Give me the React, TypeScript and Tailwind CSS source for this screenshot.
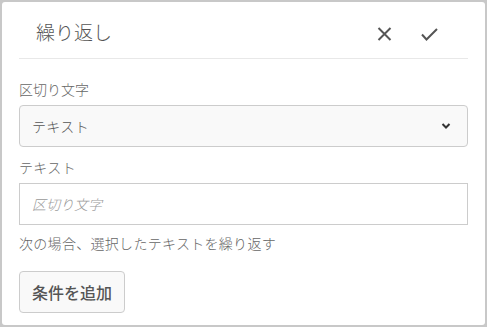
import React from "react";

const font = { fontFamily: '"Noto Sans CJK JP", "Open Sans", sans-serif' };

const App = () => {
  return (
    <div className="w-[487px] h-[327px] bg-[#c8c8c8] p-[2px]" style={font}>
      <div className="h-full bg-white rounded-[3px] px-[17px]">
        <div className="flex items-center h-[57px] border-b border-[#e8e8e8]">
          <h1 className="ml-[17px] text-[19px] font-light text-[#555] leading-[24px] mt-[3px]">
            繰り返し
          </h1>
          <div className="ml-auto flex items-center gap-[29px] mr-[30px] mt-[8px] text-[#555]">
            <svg width="15" height="14" viewBox="0 0 15 14" fill="none" stroke="currentColor" strokeWidth="2">
              <path d="M1.5 1 L13.5 13 M13.5 1 L1.5 13" />
            </svg>
            <svg width="17" height="13" viewBox="0 0 17 13" fill="none" stroke="currentColor" strokeWidth="2">
              <path d="M1 6.5 L5.5 11.5 L16 1" />
            </svg>
          </div>
        </div>

        <div className="pt-[20px]">
          <div className="text-[14px] font-light text-[#666] leading-[20px]">区切り文字</div>
          <div className="mt-[6px] h-[42px] flex items-center px-[12px] bg-[#f9f9f9] border border-[#ccc] rounded-[4px]">
            <span className="text-[14px] font-light text-[#555] tracking-wide">テキスト</span>
            <svg className="ml-auto mr-[4px]" width="10" height="6" viewBox="0 0 10 6" fill="none" stroke="#333" strokeWidth="2">
              <path d="M1.5 1 L5 4.5 L8.5 1" />
            </svg>
          </div>

          <div className="mt-[10px] text-[14px] font-light text-[#666] leading-[20px] tracking-wide">テキスト</div>
          <div className="mt-[6px] h-[42px] flex items-center px-[12px] border border-[#ccc]">
            <span className="text-[14px] font-light italic text-[#999]">区切り文字</span>
          </div>

          <div className="mt-[8px] text-[14px] font-light text-[#666] leading-[20px] tracking-[0.3px]">
            次の場合、選択したテキストを繰り返す
          </div>

          <button className="mt-[18px] h-[42px] px-[12px] bg-[#f9f9f9] border border-[#ccc] rounded-[4px] text-[16px] font-medium text-[#555]">
            条件を追加
          </button>
        </div>
      </div>
    </div>
  );
};

export default App;
